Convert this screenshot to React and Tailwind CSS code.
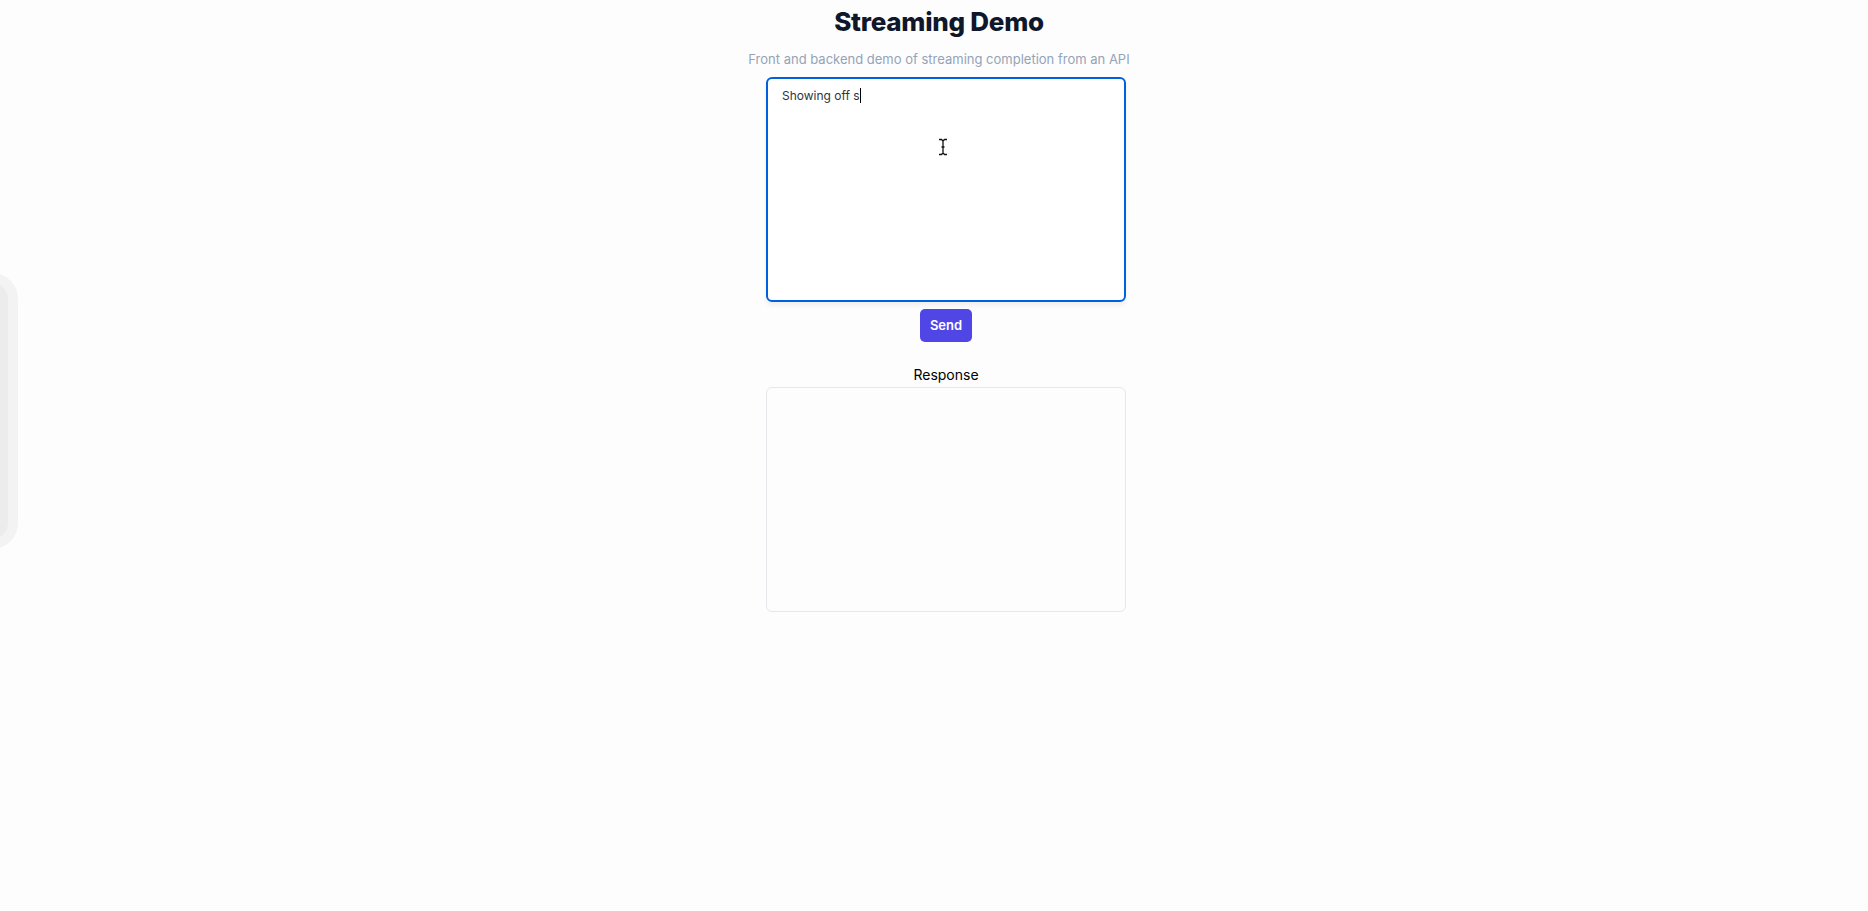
import React from "react";

function IBeam() {
  return (
    <svg width="10" height="18" viewBox="0 0 10 18" className="absolute left-[170px] top-[59px]">
      <path d="M1 1.5h2.5L5 3l1.5-1.5H9M5 3v12M1 16.5h2.5L5 15l1.5 1.5H9M3.5 9h3" fill="none" stroke="#111" strokeWidth="1.3" />
    </svg>
  );
}

export default function App() {
  return (
    <div className="relative min-h-[911px] bg-[#fdfdfd] font-['Inter','Liberation_Sans',sans-serif] overflow-hidden">
      {/* ghost panel on left edge */}
      <div className="absolute -left-[60px] top-[273px] w-[78px] h-[276px] rounded-[26px] border-[10px] border-[#f3f3f3] bg-[#ececec]" />

      <div className="flex flex-col items-center pl-[24px]">
        <h1 className="mt-[5px] h-[34px] text-[26px] leading-[34px] font-extrabold tracking-[-0.01em] text-[#0f172a] -translate-x-[7px]">
          Streaming Demo
        </h1>
        <p className="mt-[10px] text-[13px] leading-[20px] text-[#94a3b8] -translate-x-[7px]">
          Front and backend demo of streaming completion from an API
        </p>

        <div className="relative mt-[8px] w-[360px] h-[225px] rounded-[6px] border-2 border-[#0060df] bg-white shadow-[0_4px_4px_rgba(0,0,0,0.05)] px-[14px] py-[8px]">
          <p className="text-[12px] leading-[18px] text-[#333]">
            Showing off s<span className="inline-block w-px h-[15px] bg-black align-[-3px]" />
          </p>
          <IBeam />
        </div>

        <button className="mt-[7px] w-[52px] h-[33px] rounded-[5px] bg-[#4f46e5] text-white text-[13px] font-semibold">
          Send
        </button>

        <div className="mt-[24px] text-[14px] leading-[18px] text-black">Response</div>

        <div className="mt-[3px] w-[360px] h-[225px] rounded-[6px] border border-[#e5e7eb] bg-[#fdfdfd]" />
      </div>
    </div>
  );
}
